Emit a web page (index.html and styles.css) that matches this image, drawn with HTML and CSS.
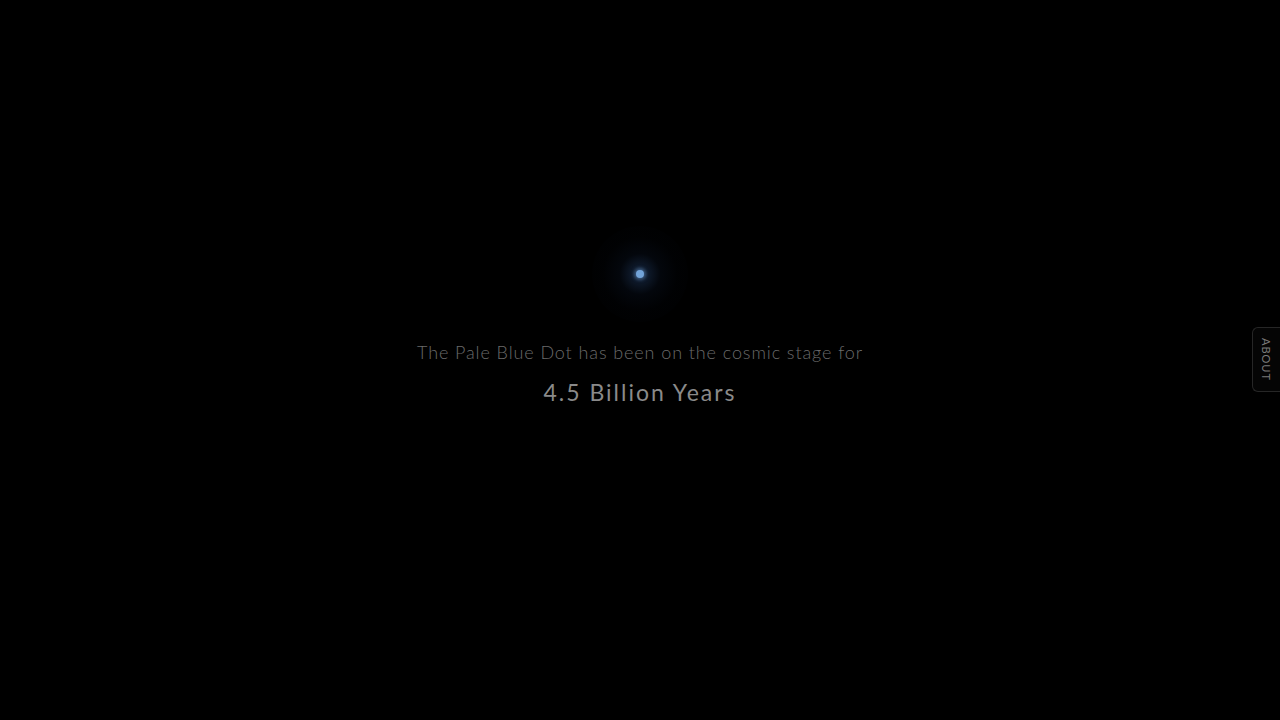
FILE: index.html
```html
<!DOCTYPE html>
<html lang="en">
<head>
<meta charset="utf-8">
<title>Pale Blue Dot</title>
<link rel="stylesheet" href="styles.css">
</head>
<body>
<main class="stage">
  <div class="dot-wrap">
    <div class="glow"></div>
    <div class="dot"></div>
  </div>
  <p class="lead">The Pale Blue Dot has been on the cosmic stage for</p>
  <p class="age">4.5 Billion Years</p>
</main>
<button class="about-tab"><span>ABOUT</span></button>
</body>
</html>
```

FILE: styles.css
```css
html, body {
  margin: 0;
  padding: 0;
  height: 100%;
  background: #000;
  overflow: hidden;
}
body {
  font-family: "Lato", "Open Sans", sans-serif;
}
.stage {
  display: flex;
  flex-direction: column;
  align-items: center;
  padding-top: 226px;
}
.dot-wrap {
  position: relative;
  width: 96px;
  height: 96px;
  display: flex;
  align-items: center;
  justify-content: center;
}
.glow {
  position: absolute;
  inset: 0;
  border-radius: 50%;
  background: radial-gradient(circle, rgba(100,150,215,0.5) 0%, rgba(50,90,150,0.28) 12%, rgba(25,50,95,0.13) 30%, rgba(12,25,50,0.06) 55%, rgba(0,0,0,0) 100%);
}
.dot {
  position: relative;
  width: 8px;
  height: 8px;
  border-radius: 50%;
  background: #72a3d8;
  box-shadow: 0 0 4px 1px rgba(110,160,220,0.5);
}
.lead {
  margin: 18px 0 0;
  font-size: 18px;
  font-weight: 300;
  color: #6a6a6a;
  letter-spacing: 0.9px;
  line-height: 24px;
}
.age {
  margin: 13px 0 0;
  font-size: 23px;
  font-weight: 400;
  color: #8a8a8a;
  letter-spacing: 2px;
  line-height: 30px;
}
.about-tab {
  position: absolute;
  right: 0;
  top: 327px;
  width: 28px;
  height: 65px;
  padding: 0;
  background: #050505;
  border: 1px solid #262626;
  border-right: none;
  border-radius: 6px 0 0 6px;
  display: flex;
  align-items: center;
  justify-content: center;
  cursor: pointer;
}
.about-tab span {
  writing-mode: vertical-rl;
  font-family: "Lato", "Open Sans", sans-serif;
  font-size: 11px;
  letter-spacing: 1px;
  color: #7a7a7a;
}
```
